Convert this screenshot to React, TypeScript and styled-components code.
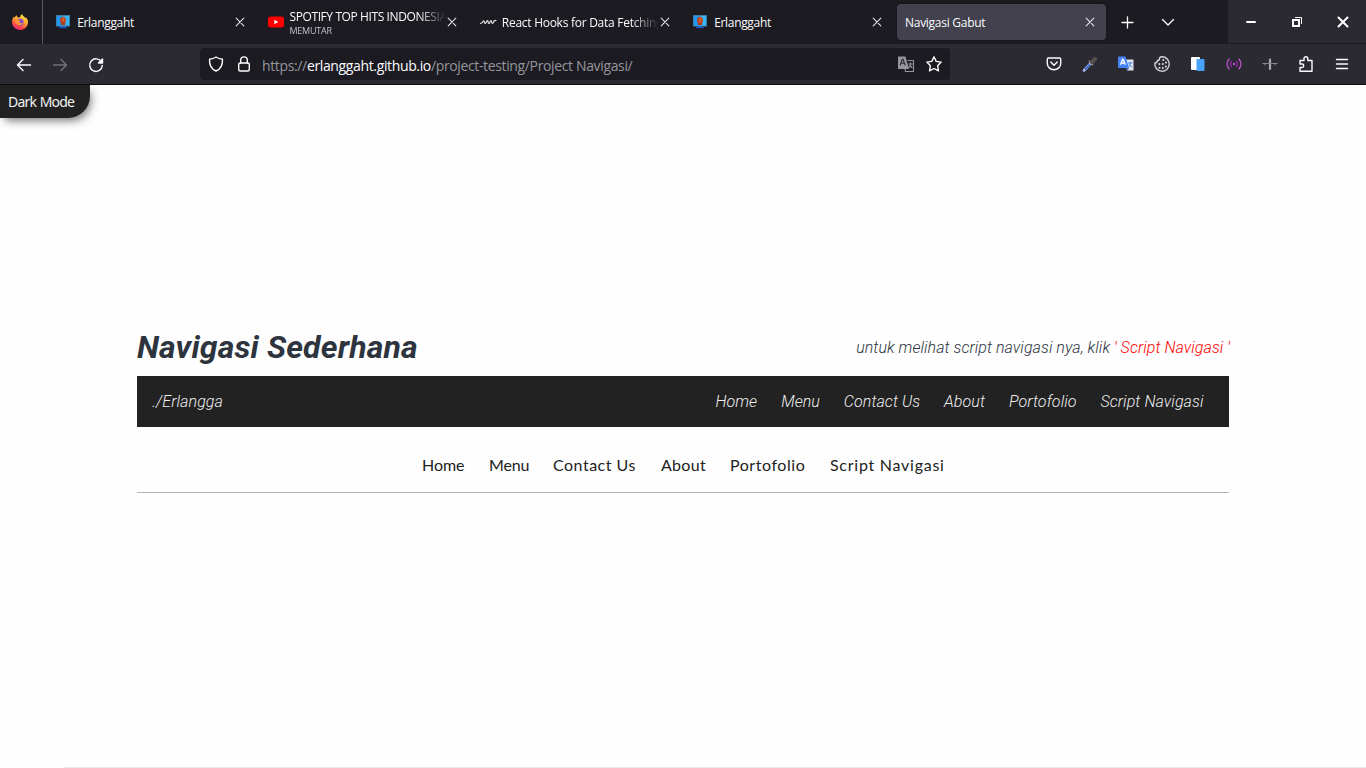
import React from "react";
import styled, { createGlobalStyle } from "styled-components";

const GlobalStyle = createGlobalStyle`
  * { box-sizing: border-box; }
  html, body { margin: 0; padding: 0; }
  body { width: 1366px; height: 768px; overflow: hidden; background: #fefefe; }
`;

const Window = styled.div`
  display: flex;
  flex-direction: column;
  width: 1366px;
  height: 768px;
  overflow: hidden;
  font-family: "Open Sans", "Noto Sans", sans-serif;
`;

const TabStrip = styled.header`
  display: flex;
  height: 44px;
  flex: none;
  background: #1c1b22;
  color: #fbfbfe;
`;

const PinnedTab = styled.div`
  display: flex;
  align-items: center;
  width: 43px;
  padding-left: 12px;
  border-right: 1px solid #57565e;
`;

const Tabs = styled.div`
  display: flex;
  align-items: center;
  gap: 3.33px;
  padding-left: 4.67px;
`;

const Tab = styled.div<{ $active?: boolean }>`
  display: flex;
  align-items: center;
  width: 209px;
  height: 36px;
  padding: 0 ${(p) => (p.$active ? 10 : 10.5)}px 0 8px;
  border-radius: 4px;
  background: ${(p) => (p.$active ? "#42414d" : "transparent")};
  box-shadow: ${(p) => (p.$active ? "0 0 3px rgba(0, 0, 0, 0.4)" : "none")};
`;

const Favicon = styled.span`
  display: flex;
  flex: none;
  width: 21.5px;
  padding-left: 0.5px;
`;

const TabLabel = styled.div<{ $fade?: boolean; $drop: number }>`
  flex: 1;
  min-width: 0;
  overflow: hidden;
  white-space: nowrap;
  padding-top: ${(p) => p.$drop}px;
  mask-image: ${(p) =>
    p.$fade ? "linear-gradient(to right, #000 calc(100% - 28px), transparent)" : "none"};
`;

const TabTitle = styled.div<{ $spacing: number }>`
  font-size: 12px;
  line-height: 16px;
  letter-spacing: ${(p) => p.$spacing}px;
`;

const TabStatus = styled.div`
  font-size: 9px;
  line-height: 11px;
  letter-spacing: -0.25px;
  color: #c2c2c7;
`;

const TabClose = styled.span`
  display: flex;
  flex: none;
  width: 12px;
`;

const StripButtons = styled.div`
  display: flex;
  align-items: center;
  gap: 25px;
  margin-left: 13px;
`;

const WindowControls = styled.div`
  display: flex;
  align-items: center;
  justify-content: space-between;
  width: 138px;
  height: 43px;
  margin-left: auto;
  padding: 0 15px;
  background: #2b2a33;
`;

const Toolbar = styled.div`
  display: flex;
  align-items: center;
  flex: none;
  height: 41px;
  padding: 0 16px;
  background: #2b2a33;
  border-bottom: 1px solid #0c0c0d;
  color: #fbfbfe;
`;

const HistoryButtons = styled.div`
  display: flex;
  gap: 20px;
  width: 184px;
  padding-top: 1px;
`;

const AddressBar = styled.div`
  display: flex;
  align-items: center;
  width: 750px;
  height: 32px;
  padding: 0 8px;
  border-radius: 4px;
  background: #1c1b22;
`;

const AddressIcons = styled.div<{ $gap: number }>`
  display: flex;
  gap: ${(p) => p.$gap}px;
`;

const Address = styled.div`
  flex: 1;
  margin-left: 10px;
  padding-top: 2px;
  font-size: 14px;
  letter-spacing: -0.36px;
  white-space: nowrap;
  color: #96959c;
`;

const Host = styled.span`
  color: #fbfbfe;
`;

const Extensions = styled.div`
  display: flex;
  gap: 20px;
  margin-left: auto;
`;

const Page = styled.main`
  display: flex;
  flex-direction: column;
  flex: 1;
  background: #fefefe;
`;

const DarkModeButton = styled.button`
  width: 90px;
  height: 33px;
  padding: 0 0 0 8px;
  border: 0;
  border-radius: 0 0 22px 0;
  background: #222;
  color: #f2f2f2;
  box-shadow: 3px 5px 9px -2px rgba(0, 0, 0, 0.5);
  clip-path: inset(0 -20px -20px 0);
  font: 14px "Noto Sans", sans-serif;
  letter-spacing: -0.82px;
  word-spacing: 0.8px;
  text-align: left;
`;

const Content = styled.section`
  width: 1092px;
  margin: 210px 0 0 137px;
`;

const TitleRow = styled.div`
  display: flex;
  align-items: center;
  justify-content: space-between;
  height: 38px;
  color: #2d343e;
  font-family: Roboto, sans-serif;
  font-style: italic;
  white-space: nowrap;
`;

const Title = styled.h1`
  margin: 0;
  font-size: 32px;
  font-weight: 700;
  letter-spacing: 0.15px;
`;

const Hint = styled.p`
  margin: 0 -1px 0 0;
  font-size: 16px;
  font-weight: 300;
  letter-spacing: 0.06px;
`;

const HintLink = styled.a`
  color: #f00;
`;

const DarkNav = styled.nav`
  display: flex;
  align-items: center;
  justify-content: space-between;
  height: 51px;
  margin-top: 10px;
  padding: 0 25.5px 0 15.3px;
  background: #222;
  color: #eee;
  font: italic 300 16px Roboto, sans-serif;
  letter-spacing: 0.08px;
`;

const DarkLinks = styled.div`
  display: flex;
  gap: 23.9px;
`;

const LightNav = styled.nav`
  display: flex;
  align-items: center;
  height: 66px;
  padding: 10px 0 0 285px;
  gap: 25px;
  border-bottom: 1px solid #b5b5b5;
  color: #222;
  font: 400 16px Lato, sans-serif;
`;

const LightLink = styled.a<{ $width: number; $spacing: number }>`
  width: ${(p) => p.$width}px;
  letter-spacing: ${(p) => p.$spacing}px;
  white-space: nowrap;
`;

const BottomRule = styled.div`
  height: 1px;
  margin: auto 0 0 64px;
  background: #e8e8e8;
`;

const Svg = styled.svg`
  display: block;
  flex: none;
  overflow: visible;
`;

type IconProps = { children: React.ReactNode; size?: number; color?: string; weight?: number };

const Icon = ({ children, size = 16, color = "#fbfbfe", weight = 1.4 }: IconProps) => (
  <Svg
    width={size}
    height={size}
    viewBox={`0 0 ${size} ${size}`}
    fill="none"
    stroke={color}
    strokeWidth={weight}
    strokeLinecap="round"
    strokeLinejoin="round"
  >
    {children}
  </Svg>
);

const FirefoxLogo = () => (
  <Svg width="16" height="16" viewBox="0 0 16 16">
    <defs>
      <linearGradient id="fx" x1="0.8" y1="0" x2="0.3" y2="1">
        <stop offset="0" stopColor="#fff04a" />
        <stop offset="0.45" stopColor="#ffa22c" />
        <stop offset="0.78" stopColor="#ff4548" />
        <stop offset="1" stopColor="#e6208c" />
      </linearGradient>
    </defs>
    <path
      d="M10 0C8.400 1.200 8.200 2.500 8.200 3.200L5.800 3.400C4.900 2.800 4.900 1.800 4.900 1.300C3.900 1.700 3.200 2.700 2.800 3.400L1.800 2.800C.5 4.400 0 6.300 0 8.100C0 12.500 3.500 16 8 16S16 12.500 16 8C16 5.700 14.900 4 13.600 3.200L13.700 4.500C12.600 2.600 10.400 2.200 10 0Z"
      fill="url(#fx)"
    />
    <circle cx="8" cy="8.300" r="3.500" fill="#7542e5" />
    <path d="M3 5.500C4.600 4.500 6 5.200 6.700 5.800L9 6L7.200 7.600C7.400 9.600 10 9 11 8.200C10.600 11 7.800 12.200 5.500 10.800C3.700 9.700 3.200 7.500 3 5.500Z" fill="#ff9139" />
  </Svg>
);

const MonitorFavicon = () => (
  <Svg width="14" height="14" viewBox="0 0 14 14">
    <path d="M4.500 11h5l1.500 2H3Z" fill="#1c62d8" />
    <rect x="0.500" y="0.500" width="13" height="10.500" fill="#35b7fa" stroke="#3f7ca4" />
    <path d="M1 1h6v9.500H1Z" fill="#1e98f4" />
    <ellipse cx="7" cy="5.300" rx="3" ry="3.600" fill="#b8431f" />
    <path d="M4.800 8h4.400v2H4.800Z" fill="#a83c1c" />
    <ellipse cx="7.300" cy="4.800" rx="1.500" ry="2.200" fill="#d45b2f" />
    <path d="M3 12.300h8v1H3Z" fill="#1748b8" />
  </Svg>
);

const YoutubeFavicon = () => (
  <Svg width="16" height="16" viewBox="0 0 16 16">
    <rect y="2.500" width="16" height="11" rx="2.500" fill="#f00" />
    <path d="M6.300 5.800v4.400L10.300 8Z" fill="#fff" />
  </Svg>
);

const WaveFavicon = () => (
  <Icon color="#dedee2" weight={1.2}>
    <path d="M-.5 9.500Q1.500 9 2.300 7Q3.300 6.500 3.500 8.500Q4 10.500 5.200 8.500Q6.200 5.500 7 7.500Q7.500 10.500 8.700 8.800Q9.700 5.500 10.500 7.500Q11.300 10.500 12.300 8.500Q13.200 6.200 15 6.500" />
  </Icon>
);

const CloseIcon = () => (
  <Icon size={12} weight={1.1} color="#e4e4e8">
    <path d="M2.200 2.200L9.800 9.800M9.800 2.200L2.200 9.800" />
  </Icon>
);

const TranslateGray = () => (
  <Icon weight={1.1} color="#96959c">
    <path d="M0 .5h7.500L11 13H0Z" fill="#96959c" stroke="none" />
    <path d="M2.300 9L4.300 3.300H5L7 9M3 7.200H6.200" stroke="#2b2a33" />
    <path d="M10 4.500h5.500v11H7.500L7 13.500" />
    <path d="M10.800 8h3.500M12.500 6.800V8Q12.500 10 11 11.500M12 9.500L14 11.500" />
  </Icon>
);

const TranslateBlue = () => (
  <Svg width="16" height="16" viewBox="0 0 16 16">
    <path d="M7 3.500h8.500v11H9Z" fill="#dfe2e8" />
    <path d="M10 7h4.500M12.300 6V7Q12 9.500 10.500 11M11.300 8.500L14 11.500" stroke="#4382e8" fill="none" />
    <path d="M1 .500h6.500L11 12H1Q0 12 0 11V1.500Q0 .5 1 .5Z" fill="#4484f4" />
    <path d="M9 12H11L9.300 14.800Z" fill="#2759bf" />
    <path d="M2.500 8.700L4.500 3.500H5.300L7.300 8.700M3.200 7H6.600" stroke="#fff" strokeWidth="1.300" fill="none" />
  </Svg>
);

const tabs = [
  { title: "Erlanggaht", icon: <MonitorFavicon />, spacing: -0.32 },
  { title: "SPOTIFY TOP HITS INDONESIA", status: "MEMUTAR", icon: <YoutubeFavicon />, fade: true, spacing: -0.4 },
  { title: "React Hooks for Data Fetching", icon: <WaveFavicon />, fade: true, spacing: -0.27 },
  { title: "Erlanggaht", icon: <MonitorFavicon />, spacing: -0.32 },
  { title: "Navigasi Gabut", active: true, spacing: -0.27 },
];

const links = ["Home", "Menu", "Contact Us", "About", "Portofolio", "Script Navigasi"];

const lightLinks = [
  { label: "Home", width: 42, spacing: -0.05 },
  { label: "Menu", width: 39, spacing: -0.2 },
  { label: "Contact Us", width: 83, spacing: 0.5 },
  { label: "About", width: 44, spacing: 0.3 },
  { label: "Portofolio", width: 75, spacing: 0.55 },
  { label: "Script Navigasi", width: 115, spacing: 0.74 },
];

export default function App() {
  return (
    <Window>
      <GlobalStyle />
      <TabStrip>
        <PinnedTab>
          <FirefoxLogo />
        </PinnedTab>
        <Tabs>
          {tabs.map((t, i) => (
            <Tab key={i} $active={t.active}>
              {t.icon && <Favicon>{t.icon}</Favicon>}
              <TabLabel $fade={t.fade} $drop={t.status ? 0 : 1}>
                <TabTitle $spacing={t.spacing}>{t.title}</TabTitle>
                {t.status && <TabStatus>{t.status}</TabStatus>}
              </TabLabel>
              <TabClose>
                <CloseIcon />
              </TabClose>
            </Tab>
          ))}
        </Tabs>
        <StripButtons>
          <Icon weight={1.3}>
            <path d="M8.500 3v11M3 8.500h11" />
          </Icon>
          <Icon weight={1.3}>
            <path d="M2.500 5.500L8 11L13.500 5.500" />
          </Icon>
        </StripButtons>
        <WindowControls>
          <Icon color="#fff" weight={2}>
            <path d="M4 8h8" />
          </Icon>
          <Svg width="16" height="16" viewBox="0 0 16 16" fill="none" stroke="#fff">
            <rect x="4" y="6" width="6" height="6" strokeWidth="2" />
            <path d="M6 3.500h6.500V10" />
          </Svg>
          <Icon color="#fff" weight={2}>
            <path d="M3.500 3.500L12.500 12.500M12.500 3.500L3.500 12.500" />
          </Icon>
        </WindowControls>
      </TabStrip>

      <Toolbar>
        <HistoryButtons>
          <Icon>
            <path d="M7 2.500L1.500 8L7 13.500M1.500 8H14.500" />
          </Icon>
          <Icon color="#73727a">
            <path d="M9 2.500L14.500 8L9 13.500M14.500 8H1.500" />
          </Icon>
          <Icon>
            <path d="M13.500 5A6.300 6.300 0 1 0 14.300 8.500" />
            <path d="M14.500 2v4h-4Z" fill="#fbfbfe" />
          </Icon>
        </HistoryButtons>
        <AddressBar>
          <AddressIcons $gap={12}>
            <Icon>
              <path d="M8 1C6.200 2.300 4 3 1.500 3.200C1.300 8.500 3 13 8 15C13 13 14.700 8.500 14.500 3.200C12 3 9.800 2.300 8 1Z" />
            </Icon>
            <Icon>
              <rect x="2.700" y="7" width="10.600" height="8" rx="1.500" />
              <path d="M4.700 7V4.200a3.300 3.300 0 0 1 6.600 0V7" />
            </Icon>
          </AddressIcons>
          <Address>
            https://<Host>erlanggaht.github.io</Host>/project-testing/Project Navigasi/
          </Address>
          <AddressIcons $gap={12}>
            <TranslateGray />
            <Icon>
              <path d="M8 .8L10.200 5.400L15.200 6.100L11.600 9.700L12.500 14.900L8 12.500L3.500 14.900L4.400 9.700L.8 6.100L5.800 5.400Z" />
            </Icon>
          </AddressIcons>
        </AddressBar>
        <Extensions>
          <Icon>
            <path d="M2.500 2h11Q14.700 2 14.700 3.200V7.500A6.700 6.200 0 0 1 1.300 7.500V3.200Q1.300 2 2.500 2Z" />
            <path d="M4.800 6L8 9.200L11.200 6" />
          </Icon>
          <Icon weight={1}>
            <path d="M2 14.500L8.500 7.500" stroke="#a9bce8" strokeWidth="2.600" />
            <path d="M3.500 13L7.500 8.800" stroke="#3762d2" strokeWidth="1.700" />
            <path d="M7.500 5.500L10.500 8.500" stroke="#8d8988" strokeWidth="1.800" />
            <path d="M10 6L13 3" stroke="#55504c" strokeWidth="4" />
          </Icon>
          <TranslateBlue />
          <Icon color="#d4d4d8" weight={1.4}>
            <path d="M8 .8A7.200 7.200 0 1 1 .9 7Q3.400 6.800 3.500 4.500Q6 4.200 5.500 2Q6.500 .8 8 .8Z" />
            <path d="M9.300 4v.1M12 6.500v.1M5.300 8v.1M8.800 8v.1M11.800 10.500v.1M5.500 11.700v.1M8.800 12v.1" strokeWidth="2.100" />
          </Icon>
          <Svg width="16" height="16" viewBox="0 0 16 16">
            <rect x="1" y="1" width="9" height="13" rx="1" fill="#fff" />
            <rect x="6.500" y="3" width="8" height="12" rx="1" fill="#46a2fc" />
          </Svg>
          <Icon color="#b455c4" weight={1.3}>
            <path d="M3 3Q-.8 8 3 13M13 3Q16.800 8 13 13" />
            <path d="M5.500 5.500Q3.500 8 5.500 10.500M10.500 5.500Q12.500 8 10.500 10.500" stroke="#9924ac" />
            <circle cx="8" cy="8" r="1.200" fill="#b455c4" stroke="none" />
          </Icon>
          <Icon color="#85858b" weight={1}>
            <path d="M8 3.500v9.500" stroke="#aaaaae" strokeWidth="2.200" />
            <path d="M1 7.500h14M3 7.500v1.500M13 7.500v1.500" />
          </Icon>
          <Icon>
            <path d="M2 4.500H6V2.700a1.900 1.900 0 0 1 3.800 0V4.500H14V15.300H2V11.500H4a1.700 1.700 0 0 0 0-3.500H2Z" />
          </Icon>
          <Icon weight={1.400}>
            <path d="M2.500 3.500h11M2.500 8h11M2.500 12.500h11" />
          </Icon>
        </Extensions>
      </Toolbar>

      <Page>
        <DarkModeButton>Dark Mode</DarkModeButton>
        <Content>
          <TitleRow>
            <Title>Navigasi Sederhana</Title>
            <Hint>
              untuk melihat script navigasi nya, klik <HintLink>' Script Navigasi '</HintLink>
            </Hint>
          </TitleRow>
          <DarkNav>
            <span>./Erlangga</span>
            <DarkLinks>
              {links.map((l) => (
                <a key={l}>{l}</a>
              ))}
            </DarkLinks>
          </DarkNav>
          <LightNav>
            {lightLinks.map((l) => (
              <LightLink key={l.label} $width={l.width} $spacing={l.spacing}>
                {l.label}
              </LightLink>
            ))}
          </LightNav>
        </Content>
        <BottomRule />
      </Page>
    </Window>
  );
}
